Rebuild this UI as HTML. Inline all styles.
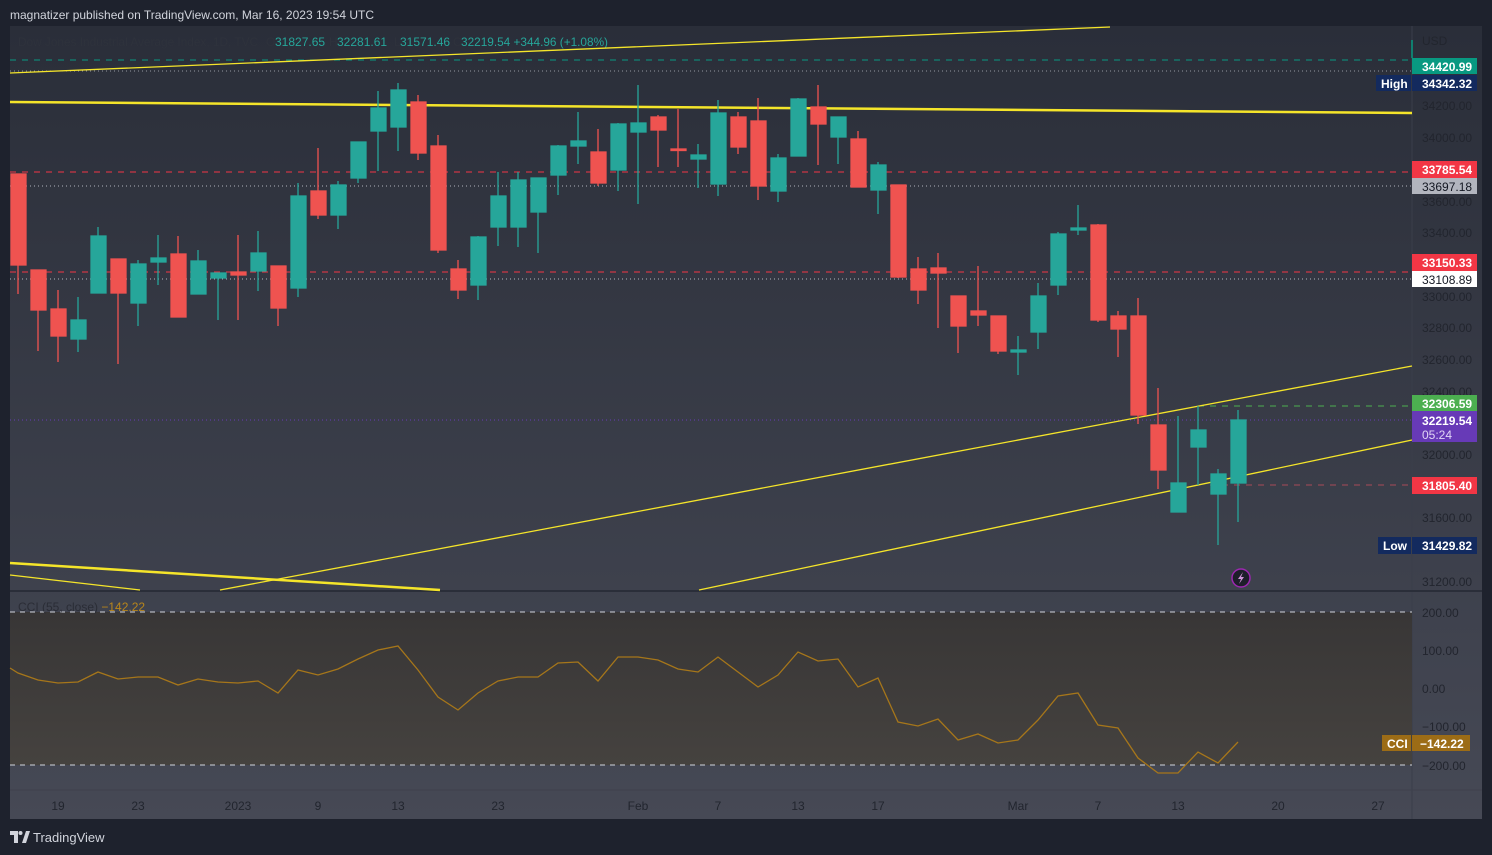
<!DOCTYPE html>
<html><head><meta charset="utf-8"><style>
html,body{margin:0;padding:0;background:#1e222d;width:1492px;height:855px;overflow:hidden;font-family:"Liberation Sans",sans-serif}
svg{display:block}
</style></head><body>
<svg width="1492" height="855" xmlns="http://www.w3.org/2000/svg" font-family="Liberation Sans, sans-serif">
<defs>
<linearGradient id="bg" x1="0" y1="0" x2="0" y2="1"><stop offset="0" stop-color="#2a2e39"/><stop offset="1" stop-color="#464955"/></linearGradient>
<linearGradient id="cf" x1="0" y1="0" x2="0" y2="1"><stop offset="0" stop-color="#383636"/><stop offset="1" stop-color="#45423f"/></linearGradient>
</defs>
<rect width="1492" height="855" fill="#1e222d"/>
<text x="10" y="19" font-size="12" fill="#d1d4dc">magnatizer published on TradingView.com, Mar 16, 2023 19:54 UTC</text>
<rect x="10" y="26" width="1472" height="793" fill="url(#bg)"/>
<line x1="1412" y1="26" x2="1412" y2="819" stroke="#3a3e4a"/>
<line x1="10" y1="591" x2="1482" y2="591" stroke="#2a2e39" stroke-width="2"/>
<line x1="10" y1="790" x2="1482" y2="790" stroke="#3e414c"/>
<!-- legend -->
<g font-size="12">
<text x="18" y="46" fill="#2e323c" textLength="240" lengthAdjust="spacingAndGlyphs">Dow Jones Industrial Average Index, 1D, TVC</text>
<text x="266" y="46" fill="#2e323c">O</text><text x="275" y="46" fill="#26a69a">31827.65</text>
<text x="329" y="46" fill="#2e323c">H</text><text x="337" y="46" fill="#26a69a">32281.61</text>
<text x="394" y="46" fill="#2e323c">L</text><text x="400" y="46" fill="#26a69a">31571.46</text>
<text x="453" y="46" fill="#2e323c">C</text><text x="461" y="46" fill="#26a69a" textLength="147" lengthAdjust="spacingAndGlyphs">32219.54  +344.96 (+1.08%)</text>
</g>
<!-- h-lines -->
<g stroke-width="1">
<line x1="10" y1="60" x2="1412" y2="60" stroke="#089981" stroke-dasharray="6,6"/>
<line x1="10" y1="71" x2="1412" y2="71" stroke="#9598a1" stroke-dasharray="1,3"/>
<line x1="10" y1="172" x2="1412" y2="172" stroke="#f23645" stroke-dasharray="6,6"/>
<line x1="10" y1="186" x2="1412" y2="186" stroke="#b2b5be" stroke-dasharray="1,3"/>
<line x1="10" y1="272" x2="1412" y2="272" stroke="#f23645" stroke-dasharray="6,6"/>
<line x1="10" y1="279" x2="1412" y2="279" stroke="#b2b5be" stroke-dasharray="1,3"/>
<line x1="1198" y1="406" x2="1412" y2="406" stroke="#4caf50" stroke-dasharray="6,6"/>
<line x1="10" y1="420" x2="1412" y2="420" stroke="#673ab7" stroke-dasharray="1,3"/>
<line x1="1210" y1="485" x2="1412" y2="485" stroke="#a84a58" stroke-dasharray="6,6"/>
</g>
<!-- yellow trend lines -->
<g stroke="#f5e52a" fill="none">
<line x1="10" y1="73" x2="1110" y2="27" stroke-width="1.3"/>
<line x1="10" y1="102" x2="1412" y2="113" stroke-width="2.5"/>
<line x1="220" y1="590" x2="1412" y2="366" stroke-width="1.3"/>
<line x1="699" y1="590" x2="1412" y2="440" stroke-width="1.3"/>
<line x1="10" y1="563" x2="440" y2="590" stroke-width="2.5"/>
<line x1="10" y1="575" x2="140" y2="590" stroke-width="1.3"/>
</g>
<!-- candles -->
<g stroke-width="1.3">
<g stroke="#ef5350" fill="#ef5350">
<line x1="18" y1="174" x2="18" y2="294"/><rect x="11" y="174" width="15" height="91"/>
<line x1="38" y1="270" x2="38" y2="351"/><rect x="31" y="270" width="15" height="40"/>
<line x1="58" y1="290" x2="58" y2="362"/><rect x="51" y="309" width="15" height="27"/>
<line x1="118" y1="259" x2="118" y2="364"/><rect x="111" y="259" width="15" height="34"/>
<line x1="178" y1="236" x2="178" y2="317"/><rect x="171" y="254" width="15" height="63"/>
<line x1="238" y1="235" x2="238" y2="320"/><rect x="231" y="272" width="15" height="3"/>
<line x1="278" y1="266" x2="278" y2="326"/><rect x="271" y="266" width="15" height="42"/>
<line x1="318" y1="148" x2="318" y2="219"/><rect x="311" y="191" width="15" height="24"/>
<line x1="418" y1="95" x2="418" y2="160"/><rect x="411" y="102" width="15" height="51"/>
<line x1="438" y1="135" x2="438" y2="253"/><rect x="431" y="146" width="15" height="104"/>
<line x1="458" y1="260" x2="458" y2="299"/><rect x="451" y="269" width="15" height="21"/>
<line x1="598" y1="129" x2="598" y2="186"/><rect x="591" y="152" width="15" height="31"/>
<line x1="658" y1="115" x2="658" y2="167"/><rect x="651" y="117" width="15" height="13"/>
<line x1="678" y1="109" x2="678" y2="167"/><rect x="671" y="149" width="15" height="1.5"/>
<line x1="738" y1="112" x2="738" y2="154"/><rect x="731" y="117" width="15" height="30"/>
<line x1="758" y1="98" x2="758" y2="200"/><rect x="751" y="121" width="15" height="65"/>
<line x1="818" y1="85" x2="818" y2="165"/><rect x="811" y="107" width="15" height="17"/>
<line x1="858" y1="131" x2="858" y2="187"/><rect x="851" y="139" width="15" height="48"/>
<line x1="898" y1="185" x2="898" y2="278"/><rect x="891" y="185" width="15" height="92"/>
<line x1="918" y1="257" x2="918" y2="304"/><rect x="911" y="269" width="15" height="21"/>
<line x1="938" y1="253" x2="938" y2="328"/><rect x="931" y="268" width="15" height="5"/>
<line x1="958" y1="296" x2="958" y2="353"/><rect x="951" y="296" width="15" height="30"/>
<line x1="978" y1="266" x2="978" y2="326"/><rect x="971" y="311" width="15" height="4"/>
<line x1="998" y1="316" x2="998" y2="354"/><rect x="991" y="316" width="15" height="35"/>
<line x1="1098" y1="224" x2="1098" y2="322"/><rect x="1091" y="225" width="15" height="95"/>
<line x1="1118" y1="311" x2="1118" y2="357"/><rect x="1111" y="316" width="15" height="13"/>
<line x1="1138" y1="298" x2="1138" y2="424"/><rect x="1131" y="316" width="15" height="99"/>
<line x1="1158" y1="388" x2="1158" y2="489"/><rect x="1151" y="425" width="15" height="45"/>
</g>
<g stroke="#26a69a" fill="#26a69a">
<line x1="78" y1="297" x2="78" y2="352"/><rect x="71" y="320" width="15" height="19"/>
<line x1="98" y1="227" x2="98" y2="293"/><rect x="91" y="236" width="15" height="57"/>
<line x1="138" y1="260" x2="138" y2="326"/><rect x="131" y="264" width="15" height="39"/>
<line x1="158" y1="235" x2="158" y2="285"/><rect x="151" y="258" width="15" height="4"/>
<line x1="198" y1="250" x2="198" y2="294"/><rect x="191" y="261" width="15" height="33"/>
<line x1="218" y1="273" x2="218" y2="320"/><rect x="211" y="273" width="15" height="5"/>
<line x1="258" y1="231" x2="258" y2="291"/><rect x="251" y="253" width="15" height="18"/>
<line x1="298" y1="183" x2="298" y2="297"/><rect x="291" y="196" width="15" height="92"/>
<line x1="338" y1="181" x2="338" y2="229"/><rect x="331" y="185" width="15" height="30"/>
<line x1="358" y1="142" x2="358" y2="183"/><rect x="351" y="142" width="15" height="36"/>
<line x1="378" y1="91" x2="378" y2="171"/><rect x="371" y="108" width="15" height="23"/>
<line x1="398" y1="83" x2="398" y2="151"/><rect x="391" y="90" width="15" height="37"/>
<line x1="478" y1="236" x2="478" y2="300"/><rect x="471" y="237" width="15" height="48"/>
<line x1="498" y1="172" x2="498" y2="246"/><rect x="491" y="196" width="15" height="31"/>
<line x1="518" y1="172" x2="518" y2="247"/><rect x="511" y="180" width="15" height="47"/>
<line x1="538" y1="178" x2="538" y2="253"/><rect x="531" y="178" width="15" height="34"/>
<line x1="558" y1="145" x2="558" y2="195"/><rect x="551" y="146" width="15" height="29"/>
<line x1="578" y1="112" x2="578" y2="164"/><rect x="571" y="141" width="15" height="5"/>
<line x1="618" y1="123" x2="618" y2="191"/><rect x="611" y="124" width="15" height="46"/>
<line x1="638" y1="85" x2="638" y2="204"/><rect x="631" y="123" width="15" height="9"/>
<line x1="698" y1="144" x2="698" y2="188"/><rect x="691" y="155" width="15" height="4"/>
<line x1="718" y1="100" x2="718" y2="196"/><rect x="711" y="113" width="15" height="71"/>
<line x1="778" y1="154" x2="778" y2="202"/><rect x="771" y="158" width="15" height="33"/>
<line x1="798" y1="98" x2="798" y2="156"/><rect x="791" y="99" width="15" height="57"/>
<line x1="838" y1="117" x2="838" y2="164"/><rect x="831" y="117" width="15" height="20"/>
<line x1="878" y1="162" x2="878" y2="214"/><rect x="871" y="165" width="15" height="25"/>
<line x1="1018" y1="336" x2="1018" y2="375"/><rect x="1011" y="350" width="15" height="2"/>
<line x1="1038" y1="283" x2="1038" y2="349"/><rect x="1031" y="296" width="15" height="36"/>
<line x1="1058" y1="232" x2="1058" y2="295"/><rect x="1051" y="234" width="15" height="51"/>
<line x1="1078" y1="205" x2="1078" y2="235"/><rect x="1071" y="228" width="15" height="2"/>
<line x1="1178" y1="416" x2="1178" y2="512"/><rect x="1171" y="483" width="15" height="29"/>
<line x1="1198" y1="406" x2="1198" y2="485"/><rect x="1191" y="430" width="15" height="17"/>
<line x1="1218" y1="469" x2="1218" y2="545"/><rect x="1211" y="474" width="15" height="20"/>
<line x1="1238" y1="410" x2="1238" y2="522"/><rect x="1231" y="420" width="15" height="63"/>
</g>
</g>
<line x1="1412" y1="40" x2="1412" y2="58" stroke="#089981" stroke-width="1.5"/>
<!-- lightning icon -->
<circle cx="1241" cy="578" r="9" fill="#1e1e2a" stroke="#9c27b0" stroke-width="1.5"/>
<path d="M1243 572 L1238 579 L1241 579 L1239 584 L1244 577 L1241 577 Z" fill="#ce93d8"/>
<!-- price axis labels -->
<g font-size="12" fill="#22252e" text-anchor="start">
<text x="1422" y="45">USD</text>
<text x="1422" y="110">34200.00</text>
<text x="1422" y="142">34000.00</text>
<text x="1422" y="206">33600.00</text>
<text x="1422" y="237">33400.00</text>
<text x="1422" y="301">33000.00</text>
<text x="1422" y="332">32800.00</text>
<text x="1422" y="364">32600.00</text>
<text x="1422" y="396">32400.00</text>
<text x="1422" y="459">32000.00</text>
<text x="1422" y="522">31600.00</text>
<text x="1422" y="586">31200.00</text>
<text x="1422" y="617">200.00</text>
<text x="1422" y="655">100.00</text>
<text x="1422" y="693">0.00</text>
<text x="1422" y="731">−100.00</text>
<text x="1422" y="770">−200.00</text>
</g>
<g font-size="12" font-weight="bold">
<rect x="1412" y="58" width="65" height="16" fill="#089981"/><text x="1422" y="71" fill="#fff">34420.99</text>
<rect x="1376" y="75" width="35" height="16" fill="#132a5e"/><text x="1381" y="88" fill="#fff">High</text>
<rect x="1412" y="75" width="65" height="16" fill="#132a5e"/><text x="1422" y="88" fill="#fff">34342.32</text>
<rect x="1412" y="161" width="65" height="17" fill="#f23645"/><text x="1422" y="174" fill="#fff">33785.54</text>
<rect x="1412" y="178" width="65" height="16" fill="#b2b5be"/><text x="1422" y="191" fill="#131722" font-weight="normal">33697.18</text>
<rect x="1412" y="254" width="65" height="17" fill="#f23645"/><text x="1422" y="267" fill="#fff">33150.33</text>
<rect x="1412" y="271" width="65" height="16" fill="#ffffff"/><text x="1422" y="284" fill="#131722" font-weight="normal">33108.89</text>
<rect x="1412" y="395" width="65" height="16" fill="#4caf50"/><text x="1422" y="408" fill="#fff">32306.59</text>
<rect x="1412" y="411" width="65" height="31" fill="#673ab7"/><text x="1422" y="425" fill="#fff">32219.54</text><text x="1422" y="439" fill="#e0d4f5" font-weight="normal">05:24</text>
<rect x="1412" y="477" width="65" height="17" fill="#f23645"/><text x="1422" y="490" fill="#fff">31805.40</text>
<rect x="1378" y="537" width="33" height="17" fill="#132a5e"/><text x="1383" y="550" fill="#fff">Low</text>
<rect x="1412" y="537" width="65" height="17" fill="#132a5e"/><text x="1422" y="550" fill="#fff">31429.82</text>
</g>
<!-- CCI pane -->
<rect x="10" y="612" width="1402" height="153" fill="url(#cf)"/>
<line x1="10" y1="612" x2="1412" y2="612" stroke="#d1d4dc" stroke-dasharray="5,5"/>
<line x1="10" y1="765" x2="1412" y2="765" stroke="#d1d4dc" stroke-dasharray="5,5"/>
<text x="18" y="611" font-size="12" fill="#2a2d36">CCI (55, close)  <tspan fill="#b8861b">−142.22</tspan></text>
<polyline fill="none" stroke="#a6761a" stroke-width="1.3" points="10,668 18,673 38,680 58,683 78,682 98,672 118,679 138,677 158,677 178,685 198,679 218,682 238,683 258,681 278,693 298,670 318,675 338,669 358,659 378,650 398,646 418,670 438,697 458,710 478,693 498,681 518,677 538,677 558,663 578,662 598,681 618,657 638,657 658,660 678,669 698,672 718,657 738,672 758,687 778,675 798,652 818,661 838,659 858,687 878,678 898,722 918,726 938,719 958,740 978,734 998,743 1018,740 1038,720 1058,696 1078,693 1098,725 1118,728 1138,758 1158,773 1178,773 1198,752 1218,763 1238,742"/>
<g font-size="12" font-weight="bold">
<rect x="1382" y="735" width="29" height="16" fill="#9c6c16"/><text x="1387" y="748" fill="#fff">CCI</text>
<rect x="1412" y="735" width="58" height="16" fill="#9c6c16"/><text x="1420" y="748" fill="#fff">−142.22</text>
</g>
<!-- time axis -->
<g font-size="12" fill="#22252e" text-anchor="middle">
<text x="58" y="810">19</text><text x="138" y="810">23</text><text x="238" y="810">2023</text><text x="318" y="810">9</text><text x="398" y="810">13</text><text x="498" y="810">23</text><text x="638" y="810">Feb</text><text x="718" y="810">7</text><text x="798" y="810">13</text><text x="878" y="810">17</text><text x="1018" y="810">Mar</text><text x="1098" y="810">7</text><text x="1178" y="810">13</text><text x="1278" y="810">20</text><text x="1378" y="810">27</text>
</g>
<!-- logo -->
<g fill="#d1d4dc">
<path d="M10 831 H18 V843 H14 V835 H10 Z"/><circle cx="20.5" cy="833" r="2"/><path d="M22 843 L26 831 H30 L26 843 Z"/>
</g>
<text x="33" y="842" font-size="13" fill="#d1d4dc">TradingView</text>
</svg>
</body></html>
